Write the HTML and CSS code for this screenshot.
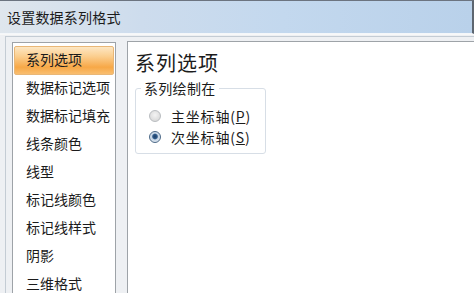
FILE: index.html
```html
<!DOCTYPE html>
<html lang="zh">
<head>
<meta charset="utf-8">
<link rel="stylesheet" href="styles.css">
</head>
<body>
<div class="window">
  <div class="titlebar">设置数据系列格式</div>
  <div class="client">
    <div class="frame">
      <ul class="nav">
        <li class="item selected">系列选项</li>
        <li class="item">数据标记选项</li>
        <li class="item">数据标记填充</li>
        <li class="item">线条颜色</li>
        <li class="item">线型</li>
        <li class="item">标记线颜色</li>
        <li class="item">标记线样式</li>
        <li class="item">阴影</li>
        <li class="item">三维格式</li>
      </ul>
      <div class="panel">
        <div class="heading">系列选项</div>
        <div class="group">
          <div class="legend">系列绘制在</div>
          <div class="option"><span class="radio"></span><span class="label">主坐标轴(<u>P</u>)</span></div>
          <div class="option"><span class="radio checked"></span><span class="label">次坐标轴(<u>S</u>)</span></div>
        </div>
      </div>
    </div>
  </div>
</div>
</body>
</html>
```

FILE: styles.css
```css
html, body {
  margin: 0;
  padding: 0;
}
body {
  width: 474px;
  height: 293px;
  overflow: hidden;
  background: #eef0f3;
  font-family: "Noto Sans CJK SC", "Noto Sans", sans-serif;
  color: #1b1b1b;
}
.window {
  display: flex;
  flex-direction: column;
  height: 293px;
}
.titlebar {
  height: 34px;
  flex: none;
  box-sizing: border-box;
  border-top: 1px solid #6c7480;
  border-right: 2px solid #5d6670;
  border-bottom: 1px solid #f4f7fa;
  background: linear-gradient(to right, #dfe6ed 0%, #cddced 30%, #c3d8ee 60%, #b9d1ea 100%);
  padding-left: 7px;
  font-size: 14px;
  line-height: 33px;
  letter-spacing: 0.2px;
}
.client {
  flex: 1;
  padding: 1px 0 0 5px;
  border-top: 1px solid #f8f8f8;
}
.frame {
  height: 100%;
  border-left: 1px solid #c4ccd4;
  border-top: 1px solid #c4ccd4;
  padding: 5px 0 0 6px;
  display: flex;
  gap: 11px;
  box-sizing: border-box;
}
.nav {
  list-style: none;
  margin: 0;
  padding: 3px 1px 0 1px;
  width: 104px;
  flex: none;
  background: #fff;
  border: 1px solid #9ea3a8;
  border-bottom: none;
  box-sizing: border-box;
}
.item {
  height: 28px;
  line-height: 27px;
  padding-left: 12px;
  font-size: 14px;
  white-space: nowrap;
  box-sizing: border-box;
}
.item.selected {
  height: 29px;
  margin-bottom: -1px;
  border: 1px solid #e9b777;
  border-radius: 2px;
  padding-left: 11px;
  line-height: 25px;
  background: linear-gradient(to bottom, #fde7c4 0%, #fbce8e 35%, #f7a847 75%, #f9be70 100%);
}
.panel {
  flex: 1;
  background: #fff;
  border-left: 1px solid #9ea3a8;
  border-top: 1px solid #9ea3a8;
  margin-top: -1px;
  padding: 9px 0 0 7px;
}
.heading {
  font-size: 20px;
  line-height: 24px;
  letter-spacing: 1px;
}
.group {
  position: relative;
  margin-top: 13px;
  width: 131px;
  height: 66px;
  box-sizing: border-box;
  border: 1px solid #d7dee6;
  border-radius: 3px;
  padding: 16px 0 0 13px;
}
.legend {
  position: absolute;
  top: -11px;
  left: 5px;
  padding: 0 3px 0 3px;
  background: #fff;
  font-size: 14px;
  line-height: 20px;
  letter-spacing: 0.3px;
}
.option {
  display: flex;
  align-items: center;
  gap: 10px;
  height: 21px;
  font-size: 14px;
}
.label {
  letter-spacing: 0.8px;
}
.label u {
  text-underline-offset: 1px;
}
.radio {
  width: 12px;
  height: 12px;
  flex: none;
  border-radius: 50%;
  box-sizing: border-box;
  border: 1px solid #b9bcc0;
  background: radial-gradient(circle at 50% 40%, #f4f4f4 0%, #dcdcdc 70%, #cfcfcf 100%);
}
.radio.checked {
  border: 1px solid #4d6a88;
  background: radial-gradient(circle at 50% 45%, #1f3f66 0%, #2e5a8a 30%, #c7d6e6 45%, #eef2f7 100%);
}
```
